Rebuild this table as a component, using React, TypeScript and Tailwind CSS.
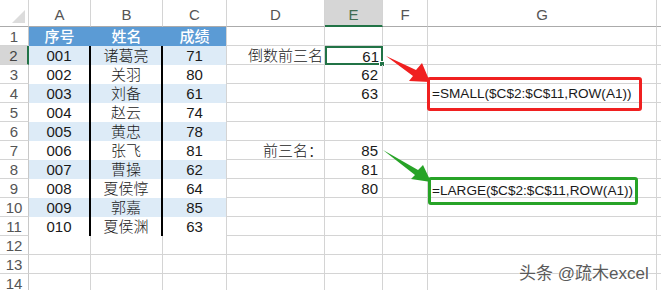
import React from 'react'

const cols = [
  { key: 'A', w: 'w-[62px]' },
  { key: 'B', w: 'w-[72px]' },
  { key: 'C', w: 'w-[64px]' },
  { key: 'D', w: 'w-[98px]' },
  { key: 'E', w: 'w-[58px]' },
  { key: 'F', w: 'w-[45px]' },
  { key: 'G', w: 'w-[229px]' },
]

const people = [
  ['001', '诸葛亮', '71'],
  ['002', '关羽', '80'],
  ['003', '刘备', '61'],
  ['004', '赵云', '74'],
  ['005', '黄忠', '78'],
  ['006', '张飞', '81'],
  ['007', '曹操', '62'],
  ['008', '夏侯惇', '64'],
  ['009', '郭嘉', '85'],
  ['010', '夏侯渊', '63'],
]

const colD: Record<number, string> = { 2: '倒数前三名', 7: '前三名：' }
const colE: Record<number, string> = { 2: '61', 3: '62', 4: '63', 7: '85', 8: '81', 9: '80' }

function Row({ n }: { n: number }) {
  const inTable = n >= 1 && n <= 11
  const banded = n >= 2 && n <= 11 && n % 2 === 0
  const person = n >= 2 && n <= 11 ? people[n - 2] : null
  const tableBg = n === 1 ? 'bg-[#5b9bd5]' : banded ? 'bg-[#ddebf7]' : 'bg-white'
  const selected = n === 2

  return (
    <div className="flex h-[19px] leading-[19px]">
      <div
        className={
          selected
            ? 'w-[29px] shrink-0 border-r-2 border-b border-r-[#217346] border-b-[#d4d4d4] bg-[#d6d6d6] text-center text-[15px] text-[#444]'
            : 'w-[29px] shrink-0 border-r border-b border-r-[#c8c8c8] border-b-[#d4d4d4] bg-white text-center text-[15px] text-[#555]'
        }
      >
        {n}
      </div>

      {/* A */}
      <div
        className={`${cols[0].w} shrink-0 text-center text-[15px] ${tableBg} ${
          inTable
            ? n === 1
              ? 'border-r border-r-[#5b9bd5] font-medium text-white'
              : 'border-r-2 border-r-black text-[#1a1a1a]'
            : 'border-r border-b border-[#d4d4d4]'
        }`}
      >
        {n === 1 ? '序号' : person?.[0]}
      </div>

      {/* B */}
      <div
        className={`${cols[1].w} shrink-0 text-center text-[15px] ${tableBg} ${
          inTable
            ? n === 1
              ? 'border-r border-r-[#5b9bd5] font-medium text-white'
              : 'border-r-2 border-r-black text-[#1a1a1a]'
            : 'border-r border-b border-[#d4d4d4]'
        }`}
      >
        {n === 1 ? '姓名' : person?.[1]}
      </div>

      {/* C */}
      <div
        className={`${cols[2].w} shrink-0 text-center text-[15px] ${tableBg} ${
          inTable
            ? n === 1
              ? 'border-r border-r-[#d4d4d4] font-medium text-white'
              : 'border-r border-r-[#d4d4d4] text-[#1a1a1a]'
            : 'border-r border-b border-[#d4d4d4]'
        }`}
      >
        {n === 1 ? '成绩' : person?.[2]}
      </div>

      {/* D */}
      <div className={`${cols[3].w} shrink-0 whitespace-nowrap border-r border-b border-[#d4d4d4] pr-[1px] text-right text-[15px] text-[#1a1a1a]`}>
        {colD[n]}
      </div>

      {/* E */}
      <div
        className={`${cols[4].w} relative shrink-0 text-right text-[15px] text-[#1a1a1a] ${
          selected ? 'border-2 border-[#217346] pr-[2px] leading-[15px]' : 'border-r border-b border-[#d4d4d4] pr-[4px]'
        }`}
      >
        <span className={selected ? 'relative top-[1px]' : ''}>{colE[n]}</span>
        {selected && (
          <div className="absolute -right-[4px] -bottom-[4px] h-[6px] w-[6px] border border-white bg-[#217346]" />
        )}
      </div>

      <div className={`${cols[5].w} shrink-0 border-r border-b border-[#d4d4d4]`} />
      <div className={`${cols[6].w} shrink-0 border-r border-b border-[#d4d4d4]`} />
      <div className="flex-1 border-b border-[#d4d4d4]" />
    </div>
  )
}

export default function App() {
  const rows = Array.from({ length: 14 }, (_, i) => i + 1)

  return (
    <div className="relative h-[290px] w-[661px] overflow-hidden bg-white font-['Liberation_Sans','Noto_Sans_CJK_SC',sans-serif] font-light">
      {/* column headers */}
      <div className="flex h-[27px]">
        <div className="relative w-[29px] shrink-0 border-r border-b border-r-[#d4d4d4] border-b-[#ababab] bg-white">
          <svg className="absolute right-[3px] bottom-[3px]" width="13" height="13" viewBox="0 0 13 13">
            <polygon points="13,0 13,13 0,13" fill="#dcdcdc" />
          </svg>
        </div>
        {cols.map(c => (
          <div
            key={c.key}
            className={`${c.w} shrink-0 pt-[5px] text-center text-[15px] leading-[20px] ${
              c.key === 'E'
                ? 'border-b-2 border-r border-b-[#217346] border-r-[#d4d4d4] bg-[#d6d6d6] text-[#3f6b52]'
                : 'border-r border-b border-r-[#d4d4d4] border-b-[#ababab] text-[#555]'
            }`}
          >
            {c.key}
          </div>
        ))}
        <div className="flex-1 border-b border-[#ababab]" />
      </div>

      {rows.map(n => (
        <Row key={n} n={n} />
      ))}

      {/* annotations */}
      <div className="absolute left-[427px] top-[77px] flex h-[34px] w-[215px] items-center whitespace-nowrap rounded-[3px] border-[3px] border-[#f02020] pl-[2px] text-[13.6px] text-[#1a1a1a]">
        =SMALL($C$2:$C$11,ROW(A1))
      </div>
      <div className="absolute left-[428px] top-[177px] flex h-[28px] w-[210px] items-center whitespace-nowrap rounded-[3px] border-[3px] border-[#27a327] pl-[1px] text-[13.6px] text-[#1a1a1a]">
        =LARGE($C$2:$C$11,ROW(A1))
      </div>

      <svg className="absolute left-0 top-0" width="661" height="290" viewBox="0 0 661 290">
        <polygon points="386,56 416,70 422,63 430,82 409,81 413,76" fill="#f02020" />
        <polygon points="383,150 418,170 423,165 431,182 411,179 415,175" fill="#27a327" />
      </svg>

      <div className="absolute left-[519px] top-[261px] whitespace-nowrap text-[17px] font-normal text-[#5a5a5a] [text-shadow:0_0_2px_#fff,0_0_2px_#fff]">
        头条 @疏木excel
      </div>
    </div>
  )
}
